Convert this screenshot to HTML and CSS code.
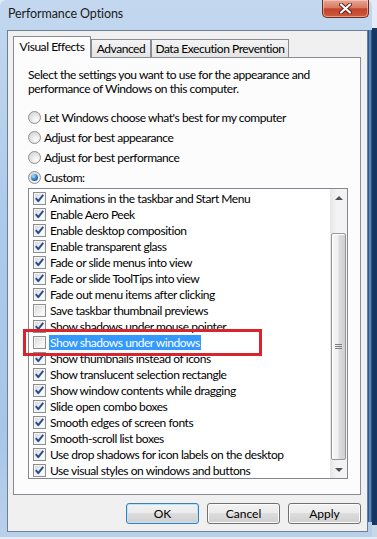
FILE: index.html
```html
<!DOCTYPE html>
<html lang="en">
<head>
    <meta charset="UTF-8">
    <meta name="viewport" content="width=device-width, initial-scale=1.0">
    <title>Performance Options</title>
    <link rel="stylesheet" href="styles.css">
</head>
<body>
    <svg class="defs" width="0" height="0">
        <symbol id="tick" viewBox="0 0 11 11">
            <path d="M1.8 5.2 L4.3 8.2 L9.2 1.8" fill="none" stroke="#2b4b8f" stroke-width="1.9" stroke-linejoin="round"/>
        </symbol>
    </svg>

    <div class="window">
        <div class="titlebar">
            <span class="title">Performance Options</span>
            <button class="close-btn">
                <svg width="13" height="11" viewBox="0 0 13 11">
                    <path d="M2 1.5 L11 9.5 M11 1.5 L2 9.5" stroke="#5c1e14" stroke-width="4" stroke-linecap="round"/>
                    <path d="M2 1.5 L11 9.5 M11 1.5 L2 9.5" stroke="#fff" stroke-width="2.2" stroke-linecap="round"/>
                </svg>
            </button>
        </div>

        <div class="client">
            <div class="tabs">
                <div class="tab active">Visual Effects</div>
                <div class="tab tab-advanced">Advanced</div>
                <div class="tab tab-dep">Data Execution Prevention</div>
            </div>

            <div class="tab-page">
                <p class="intro">Select the settings you want to use for the appearance and<br>performance of Windows on this computer.</p>

                <div class="radio-group">
                    <label class="radio"><span class="radio-dot"></span>Let Windows choose what's best for my computer</label>
                    <label class="radio"><span class="radio-dot"></span>Adjust for best appearance</label>
                    <label class="radio"><span class="radio-dot"></span>Adjust for best performance</label>
                    <label class="radio"><span class="radio-dot on"></span>Custom:</label>
                </div>

                <div class="listbox">
                    <ul class="items">
                        <li><span class="check"><svg><use href="#tick"/></svg></span><span class="label">Animations in the taskbar and Start Menu</span></li>
                        <li><span class="check"><svg><use href="#tick"/></svg></span><span class="label">Enable Aero Peek</span></li>
                        <li><span class="check"><svg><use href="#tick"/></svg></span><span class="label">Enable desktop composition</span></li>
                        <li><span class="check"><svg><use href="#tick"/></svg></span><span class="label">Enable transparent glass</span></li>
                        <li><span class="check"><svg><use href="#tick"/></svg></span><span class="label">Fade or slide menus into view</span></li>
                        <li><span class="check"><svg><use href="#tick"/></svg></span><span class="label">Fade or slide ToolTips into view</span></li>
                        <li><span class="check"><svg><use href="#tick"/></svg></span><span class="label">Fade out menu items after clicking</span></li>
                        <li><span class="check"></span><span class="label">Save taskbar thumbnail previews</span></li>
                        <li><span class="check"><svg><use href="#tick"/></svg></span><span class="label">Show shadows under mouse pointer</span></li>
                        <li class="marked"><span class="check"></span><span class="label selected">Show shadows under windows</span><span class="red-box"></span></li>
                        <li><span class="check"><svg><use href="#tick"/></svg></span><span class="label">Show thumbnails instead of icons</span></li>
                        <li><span class="check"><svg><use href="#tick"/></svg></span><span class="label">Show translucent selection rectangle</span></li>
                        <li><span class="check"><svg><use href="#tick"/></svg></span><span class="label">Show window contents while dragging</span></li>
                        <li><span class="check"><svg><use href="#tick"/></svg></span><span class="label">Slide open combo boxes</span></li>
                        <li><span class="check"><svg><use href="#tick"/></svg></span><span class="label">Smooth edges of screen fonts</span></li>
                        <li><span class="check"><svg><use href="#tick"/></svg></span><span class="label">Smooth-scroll list boxes</span></li>
                        <li><span class="check"><svg><use href="#tick"/></svg></span><span class="label">Use drop shadows for icon labels on the desktop</span></li>
                        <li><span class="check"><svg><use href="#tick"/></svg></span><span class="label">Use visual styles on windows and buttons</span></li>
                    </ul>
                    <div class="scrollbar">
                        <div class="arrow"><span class="arrow-up"></span></div>
                        <div class="track">
                            <div class="thumb"><span class="grip"></span></div>
                        </div>
                        <div class="arrow"><span class="arrow-down"></span></div>
                    </div>
                </div>
            </div>

            <div class="buttons">
                <button class="btn default">OK</button>
                <button class="btn">Cancel</button>
                <button class="btn">Apply</button>
            </div>
        </div>
    </div>
</body>
</html>
```

FILE: styles.css
```css
body {
    margin: 0;
    font-family: Lato, "Liberation Sans", sans-serif;
    font-size: 12px;
    line-height: 15px;
    letter-spacing: -0.45px;
    color: #000;
    background: linear-gradient(to bottom, #e4ebf4 0, #e4ebf4 28px, #173661 28px, #173661 525px, #c8d8eb 525px);
}
.defs {
    position: absolute;
}
.window {
    width: 372px;
    height: 537px;
    box-sizing: border-box;
    padding: 0 4px 5px 7px;
    display: flex;
    flex-direction: column;
    border-radius: 6px 6px 0 0;
    background:
        linear-gradient(to right, #1f4679, #6b9bd2 50%, #1c3f6d) right 30px / 4px 492px no-repeat,
        linear-gradient(to bottom, #c3d8ef, #aecaea 40%, #a9c6e7 80%, #b9d0ea);
}
.titlebar {
    height: 30px;
    flex-shrink: 0;
    display: flex;
    justify-content: space-between;
    align-items: flex-start;
}
.title {
    margin: 7px 0 0 1px;
    line-height: 14px;
    font-size: 12.5px;
    letter-spacing: -0.1px;
    color: #1b1b1b;
}
.close-btn {
    width: 47px;
    height: 18px;
    margin-right: -1px;
    padding: 0;
    border: 1px solid #6e2b20;
    border-top: none;
    border-radius: 0 0 5px 5px;
    background: linear-gradient(to bottom, #e8a796, #d77a62 45%, #c2432a 52%, #cf5a3d);
    box-shadow: inset 0 0 0 1px rgba(255, 220, 210, 0.5);
    display: flex;
    align-items: center;
    justify-content: center;
}
.client {
    flex: 1;
    min-height: 0;
    background: #f0f0f0;
    border: 1px solid #6f7f93;
    padding: 5px 6px 0 5px;
    display: flex;
    flex-direction: column;
}
.tabs {
    height: 21px;
    flex-shrink: 0;
    display: flex;
    align-items: flex-end;
    position: relative;
    z-index: 1;
}
.tab {
    height: 18px;
    box-sizing: border-box;
    border: 1px solid #898c95;
    border-bottom: none;
    background: linear-gradient(to bottom, #f4f4f4, #e4e4e4);
    line-height: 17px;
    text-align: center;
    white-space: nowrap;
}
.tab.active {
    width: 78px;
    height: 22px;
    margin-bottom: -1px;
    background: #fcfcfc;
    line-height: 20px;
}
.tab-advanced {
    width: 60px;
}
.tab-dep {
    width: 138px;
}
.tab-page {
    background: #fcfcfc;
    border: 1px solid #898c95;
    padding: 10px 12px 15px 14px;
}
.intro {
    margin: 0;
    line-height: 14px;
    white-space: nowrap;
}
.radio-group {
    margin-top: 11px;
    display: flex;
    flex-direction: column;
}
.radio {
    height: 20px;
    display: flex;
    align-items: center;
}
.radio-dot {
    width: 13px;
    height: 13px;
    box-sizing: border-box;
    margin-right: 3px;
    border-radius: 50%;
    border: 1px solid #8b8e93;
    background: radial-gradient(circle at 65% 70%, #fdfdfd, #e2e2e2 55%, #cfcfcf);
    display: flex;
    align-items: center;
    justify-content: center;
}
.radio-dot.on::after {
    content: "";
    width: 7px;
    height: 7px;
    border-radius: 50%;
    background: radial-gradient(circle at 35% 30%, #b9e4ff, #3a86cc 45%, #123f80);
}
.listbox {
    margin-top: 1px;
    height: 291px;
    box-sizing: border-box;
    display: flex;
    border: 1px solid #828790;
    background: #fff;
}
.items {
    flex: 1;
    list-style: none;
    margin: 0;
    padding: 1px 0 0 4px;
}
.items li {
    height: 16px;
    display: flex;
    align-items: center;
    white-space: nowrap;
}
.check {
    width: 13px;
    height: 13px;
    flex-shrink: 0;
    box-sizing: border-box;
    margin-right: 3px;
    border: 1px solid #8e8f8f;
    box-shadow: inset 0 0 0 1px #f4f4f4;
    background: linear-gradient(135deg, #d6d6d6, #f6f6f6 70%, #fdfdfd);
    display: flex;
    align-items: center;
    justify-content: center;
}
.check svg {
    width: 11px;
    height: 11px;
}
.label {
    padding: 0 1px;
    line-height: 15px;
}
.label.selected {
    background: #3399ff;
    color: #fff;
}
.marked {
    position: relative;
}
.red-box {
    position: absolute;
    left: -10px;
    top: -5px;
    width: 239px;
    height: 27px;
    box-sizing: border-box;
    border: 3px solid #d9242d;
}
.scrollbar {
    width: 17px;
    display: flex;
    flex-direction: column;
    background: linear-gradient(to right, #e6e6e6, #f3f3f3 40%, #f3f3f3);
}
.arrow {
    height: 17px;
    display: flex;
    align-items: center;
    justify-content: center;
}
.arrow-up {
    border-left: 4px solid transparent;
    border-right: 4px solid transparent;
    border-bottom: 4px solid #505050;
}
.arrow-down {
    border-left: 4px solid transparent;
    border-right: 4px solid transparent;
    border-top: 4px solid #505050;
}
.track {
    flex: 1;
    padding: 27px 1px 1px;
    display: flex;
}
.thumb {
    flex: 1;
    box-sizing: border-box;
    border: 1px solid #979797;
    border-radius: 2px;
    background: linear-gradient(to right, #f8f8f8, #efefef 45%, #dcdcdc 55%, #cfcfcf);
    box-shadow: inset 1px 1px 0 #fff;
    display: flex;
    align-items: center;
    justify-content: center;
}
.grip {
    width: 7px;
    height: 5px;
    background: repeating-linear-gradient(to bottom, #7e7e7e 0, #7e7e7e 1px, transparent 1px, transparent 2px);
}
.buttons {
    margin-top: 8px;
    display: flex;
    justify-content: flex-end;
    gap: 8px;
}
.btn {
    width: 73px;
    height: 21px;
    padding: 0;
    font: inherit;
    color: #000;
    border: 1px solid #707070;
    border-radius: 3px;
    background: linear-gradient(to bottom, #f2f2f2, #ebebeb 50%, #dddddd 50%, #cfcfcf);
    box-shadow: inset 0 0 0 1px #fbfbfb;
}
.btn.default {
    border-color: #3c7fb1;
    box-shadow: inset 0 0 0 1px #b6e6fb;
}
```
